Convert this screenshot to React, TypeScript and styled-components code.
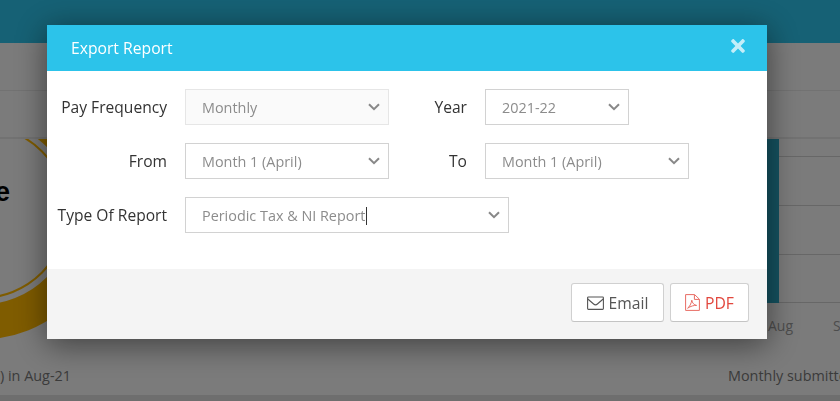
import { FaTimes } from "react-icons/fa";
import styled, { createGlobalStyle } from "styled-components";

const GlobalStyle = createGlobalStyle`
    html, body {
        margin: 0;
        padding: 0;
        height: 100%;
        overflow: hidden;
        background: #f4f4f4;
        font-family: "Open Sans", "Liberation Sans", sans-serif;
    }
    * {
        box-sizing: border-box;
    }
`;

// page behind the dialog
const Page = styled.div`
    width: 840px;
    height: 401px;
    overflow: hidden;
    background: #f6f6f6;
`;

const TopBar = styled.div`
    height: 43px;
    background: #2cc3ea;
`;

const ToolRow = styled.div<{ $height: number }>`
    height: ${props => props.$height}px;
    border-bottom: 1px solid #e4e4e4;
`;

const Main = styled.div`
    display: flex;
    justify-content: space-between;
    height: 218px;
`;

const RingPanel = styled.div`
    position: relative;
    width: 60px;
    overflow: hidden;
`;

const RingTitle = styled.span`
    position: absolute;
    right: 50px;
    top: 35px;
    font-family: "Liberation Sans", Arial, sans-serif;
    font-size: 27px;
    font-weight: 700;
    line-height: 36px;
    color: #000;
`;

const ChartPanel = styled.div`
    width: 110px;
`;

const ChartBody = styled.div`
    display: flex;
    height: 164px;
`;

const Bar = styled.div`
    width: 49px;
    background: #2aa6c2;
`;

const GridLines = styled.div`
    flex: 1;
    display: flex;
    flex-direction: column;
`;

const GridLine = styled.div<{ $height: number }>`
    height: ${props => props.$height}px;
    border-bottom: 1px solid #cfcfcf;
`;

const Axis = styled.div`
    display: flex;
    gap: 40px;
    padding: 13px 0 0 38px;
    font-size: 14px;
    line-height: 20px;
    color: #9a9a9a;
`;

const Summary = styled.div`
    display: flex;
    justify-content: space-between;
    height: 38px;
    padding-top: 9px;
    font-size: 14.4px;
    line-height: 20px;
    color: #777;
    white-space: nowrap;
`;

const SummaryRight = styled.span`
    width: 112px;
    overflow: hidden;
`;

const BottomStrip = styled.div`
    height: 6px;
    background: #dcdcdc;
`;

// dialog
const Overlay = styled.div`
    position: fixed;
    inset: 0;
    padding: 25px 0 0 47px;
    background: rgba(0, 0, 0, 0.5);
`;

const Modal = styled.div`
    width: 720px;
    height: 314px;
    display: flex;
    flex-direction: column;
    background: #fff;
    box-shadow: 0 5px 30px rgba(0, 0, 0, 0.5);
`;

const ModalHeader = styled.div`
    height: 46px;
    display: flex;
    align-items: center;
    justify-content: space-between;
    padding: 0 19px 0 24px;
    background: #2cc3ea;
    color: #fff;
`;

const ModalTitle = styled.h4`
    margin: 0;
    font-size: 15.7px;
    font-weight: 400;
    line-height: 22px;
`;

const CloseButton = styled.button`
    display: flex;
    padding: 0;
    border: none;
    background: none;
    color: #fff;
    opacity: 0.72;
    font-size: 20px;
    margin-bottom: 5px;
`;

const ModalBody = styled.div`
    flex: 1;
    display: flex;
    flex-direction: column;
    gap: 18px;
    padding-top: 18px;
`;

const Row = styled.div`
    display: flex;
    gap: 18px;
`;

const Label = styled.label<{ $width: number }>`
    width: ${props => props.$width}px;
    font-size: 15.6px;
    line-height: 36px;
    text-align: right;
    color: #333;
    white-space: nowrap;
`;

const SelectBox = styled.div<{ $width: number; $disabled?: boolean }>`
    width: ${props => props.$width}px;
    height: 36px;
    display: flex;
    align-items: center;
    justify-content: space-between;
    padding: 0 8px 0 16px;
    border: 1px solid ${props => (props.$disabled ? "#e6e6e6" : "#d2d2d2")};
    background: ${props => (props.$disabled ? "#fafafa" : "#fff")};
    font-size: 14.4px;
    color: #8c8c8c;
`;

const TextCaret = styled.span`
    display: inline-block;
    width: 1px;
    height: 18px;
    margin-left: 1px;
    vertical-align: -4px;
    background: #333;
`;

const ModalFooter = styled.div`
    height: 70px;
    display: flex;
    justify-content: flex-end;
    gap: 6px;
    padding: 14px 18px 0 0;
    background: #f4f4f4;
`;

const FooterButton = styled.button<{ $width: number; $danger?: boolean }>`
    width: ${props => props.$width}px;
    height: 39px;
    display: flex;
    align-items: center;
    justify-content: center;
    gap: 5px;
    padding: 0;
    border: 1px solid #d0d0d0;
    border-bottom-color: #c4c4c4;
    border-radius: 3px;
    background: #fff;
    font-family: inherit;
    font-size: 15.7px;
    color: ${props => (props.$danger ? "#e2473d" : "#555")};
`;

function Chevron() {
    return (
        <svg width="12" height="8" viewBox="0 0 12 8" fill="none">
            <path d="M1 1.2 6 6.2l5-5" stroke="#888" strokeWidth="2" />
        </svg>
    );
}

function EnvelopeIcon() {
    return (
        <svg width="17" height="14" viewBox="0 0 17 14" fill="none" stroke="currentColor" strokeWidth="1.1">
            <rect x="0.6" y="1" width="15.8" height="12.4" rx="0.8" />
            <path d="M0.8 3 6.6 8c1.1 1 2.7 1 3.8 0l5.8-5" />
        </svg>
    );
}

function PdfIcon() {
    return (
        <svg width="15" height="17" viewBox="0 0 15 17" fill="none" stroke="currentColor" strokeWidth="1" opacity="0.8">
            <path d="M0.6 0.6H9.6L14.4 5.2V16.4H0.6Z" />
            <path d="M9.4 0.8V5.4H14.2" />
            <path d="M2.6 14.2C4.4 13 6.4 9.4 6.8 6.2c.3 2.6 2.4 5 4.8 5.2-2.6-.2-6 .8-9 2.8Z" />
        </svg>
    );
}

function Ring() {
    return (
        <svg width="60" height="218" viewBox="0 139 60 218">
            <circle cx="-19" cy="212" r="86" fill="none" stroke="#ffb800" strokeWidth="2" />
            <circle cx="-19" cy="212" r="110" fill="none" stroke="#ffb800" strokeWidth="35" />
        </svg>
    );
}

function App() {
    return (
        <>
            <GlobalStyle />
            <Page>
                <TopBar />
                <ToolRow $height={48} />
                <ToolRow $height={47} />
                <ToolRow $height={1} />
                <Main>
                    <RingPanel>
                        <Ring />
                        <RingTitle>e</RingTitle>
                    </RingPanel>
                    <ChartPanel>
                        <ChartBody>
                            <Bar />
                            <GridLines>
                                <GridLine $height={18} />
                                <GridLine $height={49} />
                                <GridLine $height={49} />
                                <GridLine $height={48} />
                            </GridLines>
                        </ChartBody>
                        <Axis>
                            <span>Aug</span>
                            <span>S</span>
                        </Axis>
                    </ChartPanel>
                </Main>
                <Summary>
                    <span>) in Aug-21</span>
                    <SummaryRight>Monthly submitted</SummaryRight>
                </Summary>
                <BottomStrip />
            </Page>
            <Overlay>
                <Modal>
                    <ModalHeader>
                        <ModalTitle>Export Report</ModalTitle>
                        <CloseButton><FaTimes /></CloseButton>
                    </ModalHeader>
                    <ModalBody>
                        <Row>
                            <Label $width={120}>Pay Frequency</Label>
                            <SelectBox $width={204} $disabled>Monthly<Chevron /></SelectBox>
                            <Label $width={60}>Year</Label>
                            <SelectBox $width={144}>2021-22<Chevron /></SelectBox>
                        </Row>
                        <Row>
                            <Label $width={120}>From</Label>
                            <SelectBox $width={204}>Month 1 (April)<Chevron /></SelectBox>
                            <Label $width={60}>To</Label>
                            <SelectBox $width={204}>Month 1 (April)<Chevron /></SelectBox>
                        </Row>
                        <Row>
                            <Label $width={120}>Type Of Report</Label>
                            <SelectBox $width={324}>
                                <span>Periodic Tax &amp; NI Report<TextCaret /></span>
                                <Chevron />
                            </SelectBox>
                        </Row>
                    </ModalBody>
                    <ModalFooter>
                        <FooterButton $width={93}><EnvelopeIcon />Email</FooterButton>
                        <FooterButton $width={79} $danger><PdfIcon />PDF</FooterButton>
                    </ModalFooter>
                </Modal>
            </Overlay>
        </>
    );
}

export default App;
